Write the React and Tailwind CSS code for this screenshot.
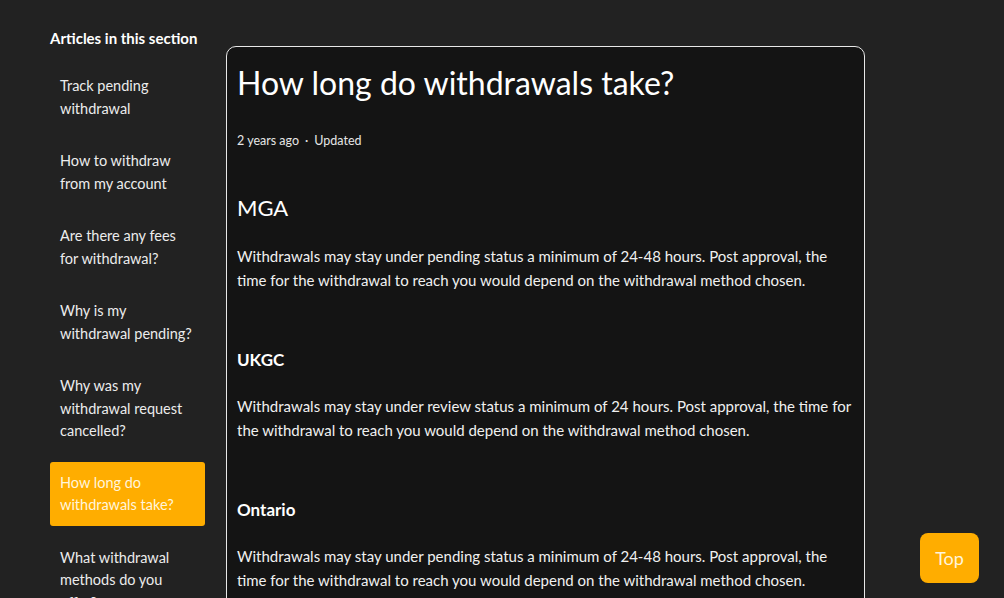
const articles = [
  'Track pending withdrawal',
  'How to withdraw from my account',
  'Are there any fees for withdrawal?',
  'Why is my withdrawal pending?',
  'Why was my withdrawal request cancelled?',
  'How long do withdrawals take?',
  'What withdrawal methods do you offer?',
];

const ACTIVE = 'How long do withdrawals take?';

const sections = [
  {
    title: 'MGA',
    big: true,
    text: 'Withdrawals may stay under pending status a minimum of 24-48 hours. Post approval, the time for the withdrawal to reach you would depend on the withdrawal method chosen.',
  },
  {
    title: 'UKGC',
    text: 'Withdrawals may stay under review status a minimum of 24 hours. Post approval, the time for the withdrawal to reach you would depend on the withdrawal method chosen.',
  },
  {
    title: 'Ontario',
    text: 'Withdrawals may stay under pending status a minimum of 24-48 hours. Post approval, the time for the withdrawal to reach you would depend on the withdrawal method chosen.',
  },
];

export default function App() {
  return (
    <div
      className="h-[598px] overflow-hidden bg-[#222222] text-[#f2f2f2]"
      style={{ fontFamily: 'Lato, "Open Sans", sans-serif' }}
    >
      <div className="flex items-start gap-[21px] pl-[50px]">
        {/* Sidebar */}
        <aside className="w-[155px] shrink-0 pt-[28px]">
          <h3 className="whitespace-nowrap text-[15px] font-bold leading-[20px] text-white">Articles in this section</h3>
          <ul className="mt-[17px] flex flex-col gap-[11px]">
            {articles.map((a) => (
              <li
                key={a}
                className={`rounded-[3px] px-[10px] pb-[9px] pt-[10px] text-[14.5px] leading-[22.5px] ${
                  a === ACTIVE ? '-mt-[1px] bg-[#ffad00] text-[#fff5dc]' : 'text-[#ececec]'
                }`}
              >
                {a}
              </li>
            ))}
          </ul>
        </aside>

        {/* Article */}
        <main className="mt-[46px] w-[639px] shrink-0 rounded-[10px] border border-[#e8e8e8] bg-[#141414] px-[10px] pb-10">
          <h1 className="pt-[14px] text-[32px] font-normal leading-[44px] text-white">
            How long do withdrawals take?
          </h1>
          <div className="mt-[27px] flex items-center text-[12.5px] leading-[18px] text-[#e6e6e6]">
            <span>2 years ago</span>
            <span className="mx-[6px]">·</span>
            <span>Updated</span>
          </div>
          <div className="mt-[43px]">
            {sections.map((s, i) => (
              <section key={s.title} className={i > 0 ? 'mt-[56px]' : ''}>
                {s.big ? (
                  <h2 className="text-[22px] font-normal leading-[30px] text-white">{s.title}</h2>
                ) : (
                  <h3 className="text-[17px] font-bold leading-[24px] text-white">{s.title}</h3>
                )}
                <p className={`${s.big ? 'mt-[21px]' : 'mt-[22px]'} text-[15px] leading-[24px] text-[#f0f0f0]`}>
                  {s.text}
                </p>
              </section>
            ))}
          </div>
        </main>
      </div>

      <button className="fixed bottom-[15px] right-[25px] h-[50px] w-[59px] rounded-[8px] bg-[#ffad00] text-[18px] text-[#fff5dc]">
        Top
      </button>
    </div>
  );
}
